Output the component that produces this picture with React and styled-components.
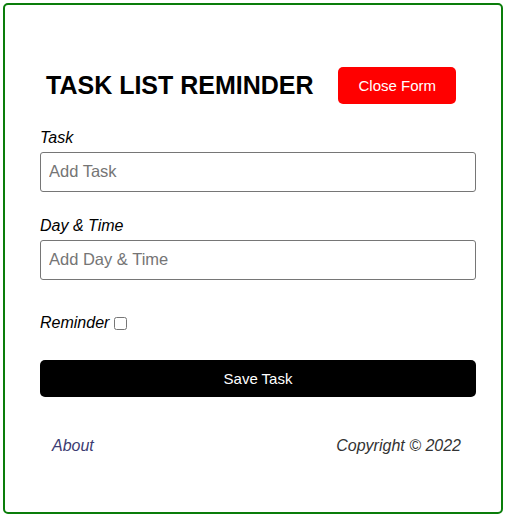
import React from "react";
import styled, { createGlobalStyle } from "styled-components";

const Global = createGlobalStyle`
  * { box-sizing: border-box; }
  body { margin: 0; background: #fff; font-family: "Liberation Sans", Arial, sans-serif; }
`;

const Container = styled.div`
  width: 500px;
  height: 511px;
  margin: 3px;
  border: 2px solid #0a7d0a;
  border-radius: 5px;
  padding: 30px;
`;

const Header = styled.header`
  display: flex;
  justify-content: space-between;
  align-items: center;
  padding: 27px 10px 0 10px;
`;

const Title = styled.h1`
  margin: 0 0 0 1px;
  font-size: 25px;
  font-weight: bold;
  color: #000;
`;

const Button = styled.button`
  display: ${(p) => (p.$block ? "block" : "inline-block")};
  width: ${(p) => (p.$block ? "100%" : "auto")};
  background: ${(p) => p.$bg};
  color: #fff;
  border: none;
  border-radius: 5px;
  padding: 10px 20px;
  margin: 5px;
  font-family: "Liberation Sans", Arial, sans-serif;
  font-size: 15px;
  line-height: 17px;
  cursor: pointer;
`;

const Form = styled.form`
  margin-top: 20px;
`;

const Control = styled.div`
  display: flex;
  flex-direction: column;
  margin: 0 0 20px 0;
`;

const Label = styled.label`
  display: block;
  font-style: italic;
  font-size: 16px;
  line-height: 18px;
  color: #000;
  padding-left: 5px;
`;

const Input = styled.input`
  display: block;
  width: 100%;
  height: 40px;
  margin: 5px;
  padding: 2px 8px 4px;
  font-family: "Liberation Sans", Arial, sans-serif;
  font-size: 16.5px;
  border: 1px solid #767676;
  border-radius: 3px;
  &::placeholder { color: #757575; }
`;

const CheckRow = styled.div`
  display: flex;
  align-items: center;
  height: 35px;
  margin-bottom: 20px;
  padding-left: 5px;
  padding-top: 1px;
`;

const InlineLabel = styled.label`
  font-style: italic;
  font-size: 16px;
  color: #000;
`;

const Check = styled.input`
  width: 13px;
  height: 13px;
  margin: 0 0 0 5px;
`;

const Footer = styled.footer`
  display: flex;
  justify-content: space-between;
  align-items: center;
  margin-top: 30px;
  padding: 10px 10px 0 17px;
  font-style: italic;
  font-size: 16px;
  line-height: 18px;
`;

const FooterLink = styled.a`
  color: ${(p) => p.$color};
  text-decoration: none;
`;

export default function App() {
  return (
    <>
      <Global />
      <Container>
        <Header>
          <Title>TASK LIST REMINDER</Title>
          <Button $bg="#ff0000" type="button">Close Form</Button>
        </Header>
        <Form onSubmit={(e) => e.preventDefault()}>
          <Control>
            <Label>Task</Label>
            <Input type="text" placeholder="Add Task" />
          </Control>
          <Control>
            <Label>Day &amp; Time</Label>
            <Input type="text" placeholder="Add Day & Time" />
          </Control>
          <CheckRow>
            <InlineLabel>Reminder</InlineLabel>
            <Check type="checkbox" />
          </CheckRow>
          <Button $block $bg="#000" type="submit">Save Task</Button>
        </Form>
        <Footer>
          <FooterLink $color="#3c3c72" href="#">About</FooterLink>
          <FooterLink $color="#333" as="span">Copyright © 2022</FooterLink>
        </Footer>
      </Container>
    </>
  );
}
